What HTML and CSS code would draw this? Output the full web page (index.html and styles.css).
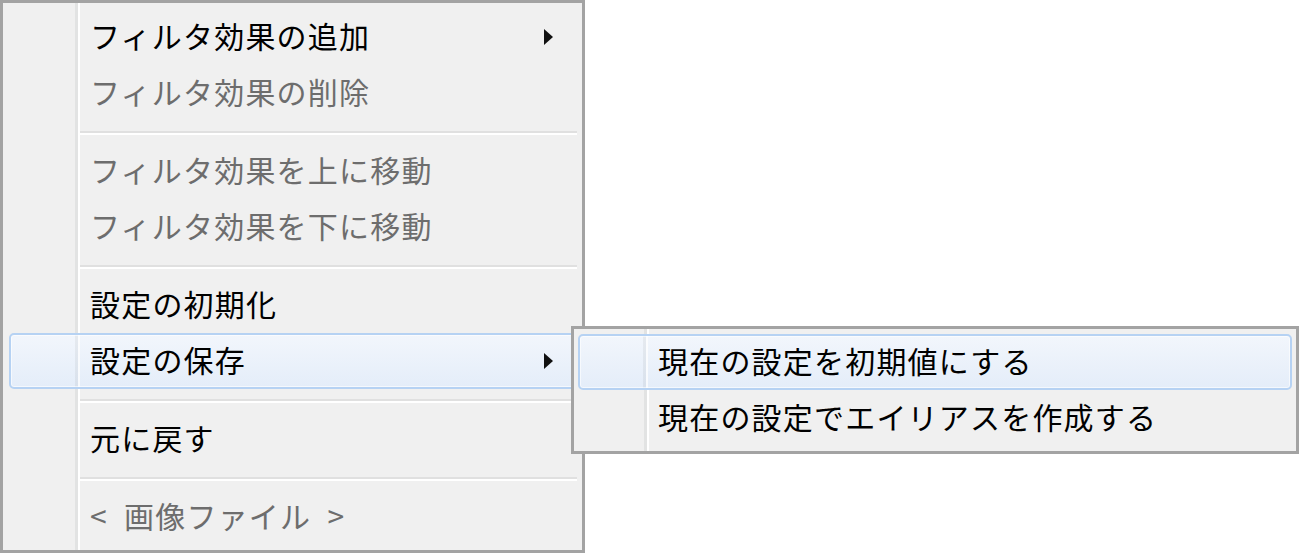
FILE: index.html
```html
<!DOCTYPE html>
<html lang="ja">
<head>
    <meta charset="UTF-8">
    <meta name="viewport" content="width=device-width, initial-scale=1.0">
    <title>フィルタ効果メニュー</title>
    <link rel="stylesheet" href="styles.css">
</head>
<body>

<div class="menu">
    <div class="item has-sub">フィルタ効果の追加<span class="arrow"></span></div>
    <div class="item disabled">フィルタ効果の削除</div>
    <div class="separator"></div>
    <div class="item disabled">フィルタ効果を上に移動</div>
    <div class="item disabled">フィルタ効果を下に移動</div>
    <div class="separator"></div>
    <div class="item">設定の初期化</div>
    <div class="item has-sub active">設定の保存<span class="arrow"></span></div>
    <div class="separator"></div>
    <div class="item">元に戻す</div>
    <div class="separator"></div>
    <div class="item disabled">&lt;&ensp;画像ファイル&ensp;&gt;</div>
</div>

<div class="menu submenu">
    <div class="item active">現在の設定を初期値にする</div>
    <div class="item">現在の設定でエイリアスを作成する</div>
</div>

</body>
</html>
```

FILE: styles.css
```css
body {
    margin: 0;
    background-color: #fff;
    font-family: "Noto Sans CJK JP", "Noto Sans", sans-serif;
    font-size: 30px;
    color: #000;
}

.menu {
    position: relative;
    box-sizing: border-box;
    width: 585px;
    height: 553px;
    padding: 6px 2px 6px 6px;
    border: 3px solid #a3a3a3;
    background-color: #f0f0f0;
    background-image: linear-gradient(to right,
        transparent 72px, #e2e3e3 72px, #e2e3e3 75px,
        #fff 75px, #fff 77px, transparent 77px);
    display: flex;
    flex-direction: column;
}

.item {
    box-sizing: border-box;
    height: 56px;
    flex: none;
    display: flex;
    align-items: center;
    padding-left: 79px;
    padding-bottom: 5px;
    border: 2px solid transparent;
    border-radius: 5px;
    letter-spacing: 1.2px;
    white-space: nowrap;
}

.item.disabled {
    color: #6d6d6d;
}

.item.active {
    border-color: #b6d2f3;
    background-image:
        linear-gradient(to right,
            transparent 64px, rgba(0, 0, 0, 0.05) 64px, rgba(0, 0, 0, 0.05) 67px,
            rgba(255, 255, 255, 0.7) 67px, rgba(255, 255, 255, 0.7) 69px, transparent 69px),
        linear-gradient(to bottom, #f2f6fc, #e4edf9);
    box-shadow: inset 0 0 0 1px rgba(255, 255, 255, 0.6);
}

.arrow {
    margin-left: auto;
    margin-right: 25px;
    margin-top: 5px;
    width: 0;
    height: 0;
    border-left: 9px solid #111;
    border-top: 8px solid transparent;
    border-bottom: 8px solid transparent;
}

.separator {
    flex: none;
    height: 22px;
    margin-left: 71px;
    margin-right: 3px;
    background-image: linear-gradient(to bottom,
        transparent 10px, #e0e0e0 10px, #e0e0e0 12px,
        #fff 12px, #fff 14px, transparent 14px);
}

.submenu {
    position: absolute;
    left: 571px;
    top: 326px;
    width: 728px;
    height: 128px;
    padding: 5px 4px;
    background-image: linear-gradient(to right,
        transparent 70px, #e2e3e3 70px, #e2e3e3 73px,
        #fff 73px, #fff 75px, transparent 75px);
}

.submenu .item {
    padding-left: 78px;
}

.submenu .item.active {
    background-image:
        linear-gradient(to right,
            transparent 63px, rgba(0, 0, 0, 0.05) 63px, rgba(0, 0, 0, 0.05) 66px,
            rgba(255, 255, 255, 0.7) 66px, rgba(255, 255, 255, 0.7) 68px, transparent 68px),
        linear-gradient(to bottom, #f2f6fc, #e4edf9);
}
```
